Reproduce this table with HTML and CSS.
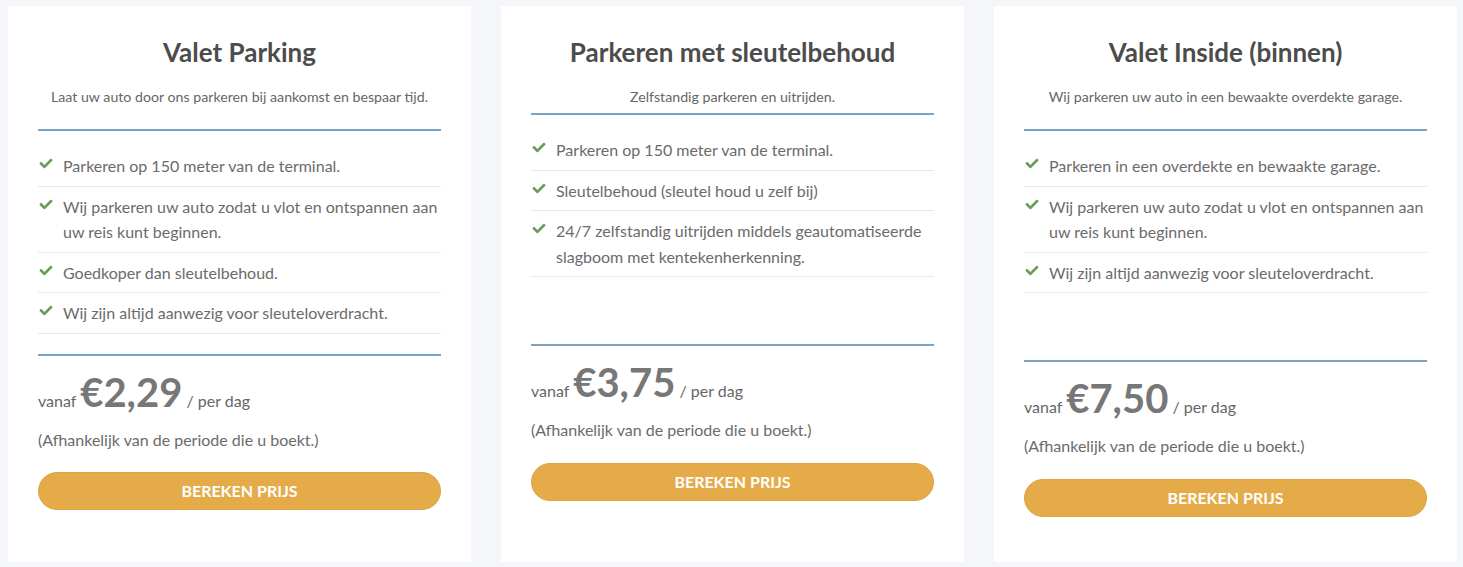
FILE: index.html
```html
<!DOCTYPE html>
<html lang="nl">
<head>
    <meta charset="UTF-8">
    <title>Parkeren - tarieven</title>
    <link rel="stylesheet" href="styles.css">
</head>
<body>

<div class="plans">

    <!-- Valet -->
    <div class="plan">
        <div class="plan-head">
            <h2 class="plan-title">Valet Parking</h2>
            <p class="plan-intro">Laat uw auto door ons parkeren bij aankomst en bespaar tijd.</p>
        </div>
        <ul class="features">
            <li><svg class="check" viewBox="0 0 512 512"><path d="M173.9 439.4l-166.4-166.4c-10-10-10-26.2 0-36.2l36.2-36.2c10-10 26.2-10 36.2 0L192 312.7 432.1 72.6c10-10 26.2-10 36.2 0l36.2 36.2c10 10 10 26.2 0 36.2l-294.4 294.4c-10 10-26.2 10-36.2 0z"/></svg><span>Parkeren op 150 meter van de terminal.</span></li>
            <li><svg class="check" viewBox="0 0 512 512"><path d="M173.9 439.4l-166.4-166.4c-10-10-10-26.2 0-36.2l36.2-36.2c10-10 26.2-10 36.2 0L192 312.7 432.1 72.6c10-10 26.2-10 36.2 0l36.2 36.2c10 10 10 26.2 0 36.2l-294.4 294.4c-10 10-26.2 10-36.2 0z"/></svg><span>Wij parkeren uw auto zodat u vlot en ontspannen aan uw reis kunt beginnen.</span></li>
            <li><svg class="check" viewBox="0 0 512 512"><path d="M173.9 439.4l-166.4-166.4c-10-10-10-26.2 0-36.2l36.2-36.2c10-10 26.2-10 36.2 0L192 312.7 432.1 72.6c10-10 26.2-10 36.2 0l36.2 36.2c10 10 10 26.2 0 36.2l-294.4 294.4c-10 10-26.2 10-36.2 0z"/></svg><span>Goedkoper dan sleutelbehoud.</span></li>
            <li><svg class="check" viewBox="0 0 512 512"><path d="M173.9 439.4l-166.4-166.4c-10-10-10-26.2 0-36.2l36.2-36.2c10-10 26.2-10 36.2 0L192 312.7 432.1 72.6c10-10 26.2-10 36.2 0l36.2 36.2c10 10 10 26.2 0 36.2l-294.4 294.4c-10 10-26.2 10-36.2 0z"/></svg><span>Wij zijn altijd aanwezig voor sleuteloverdracht.</span></li>
        </ul>
        <div class="plan-price">
            <div class="price"><span>vanaf</span> <strong>€2,29</strong> <span>/ per dag</span></div>
            <p class="price-note">(Afhankelijk van de periode die u boekt.)</p>
            <a class="btn-calc" href="#">Bereken prijs</a>
        </div>
    </div>

    <!-- Sleutelbehoud -->
    <div class="plan">
        <div class="plan-head tight">
            <h2 class="plan-title">Parkeren met sleutelbehoud</h2>
            <p class="plan-intro">Zelfstandig parkeren en uitrijden.</p>
        </div>
        <ul class="features short">
            <li><svg class="check" viewBox="0 0 512 512"><path d="M173.9 439.4l-166.4-166.4c-10-10-10-26.2 0-36.2l36.2-36.2c10-10 26.2-10 36.2 0L192 312.7 432.1 72.6c10-10 26.2-10 36.2 0l36.2 36.2c10 10 10 26.2 0 36.2l-294.4 294.4c-10 10-26.2 10-36.2 0z"/></svg><span>Parkeren op 150 meter van de terminal.</span></li>
            <li><svg class="check" viewBox="0 0 512 512"><path d="M173.9 439.4l-166.4-166.4c-10-10-10-26.2 0-36.2l36.2-36.2c10-10 26.2-10 36.2 0L192 312.7 432.1 72.6c10-10 26.2-10 36.2 0l36.2 36.2c10 10 10 26.2 0 36.2l-294.4 294.4c-10 10-26.2 10-36.2 0z"/></svg><span>Sleutelbehoud (sleutel houd u zelf bij)</span></li>
            <li><svg class="check" viewBox="0 0 512 512"><path d="M173.9 439.4l-166.4-166.4c-10-10-10-26.2 0-36.2l36.2-36.2c10-10 26.2-10 36.2 0L192 312.7 432.1 72.6c10-10 26.2-10 36.2 0l36.2 36.2c10 10 10 26.2 0 36.2l-294.4 294.4c-10 10-26.2 10-36.2 0z"/></svg><span>24/7 zelfstandig uitrijden middels geautomatiseerde slagboom met kentekenherkenning.</span></li>
        </ul>
        <div class="plan-price">
            <div class="price"><span>vanaf</span> <strong>€3,75</strong> <span>/ per dag</span></div>
            <p class="price-note">(Afhankelijk van de periode die u boekt.)</p>
            <a class="btn-calc" href="#">Bereken prijs</a>
        </div>
    </div>

    <!-- Valet inside -->
    <div class="plan">
        <div class="plan-head">
            <h2 class="plan-title">Valet Inside (binnen)</h2>
            <p class="plan-intro">Wij parkeren uw auto in een bewaakte overdekte garage.</p>
        </div>
        <ul class="features short">
            <li><svg class="check" viewBox="0 0 512 512"><path d="M173.9 439.4l-166.4-166.4c-10-10-10-26.2 0-36.2l36.2-36.2c10-10 26.2-10 36.2 0L192 312.7 432.1 72.6c10-10 26.2-10 36.2 0l36.2 36.2c10 10 10 26.2 0 36.2l-294.4 294.4c-10 10-26.2 10-36.2 0z"/></svg><span>Parkeren in een overdekte en bewaakte garage.</span></li>
            <li><svg class="check" viewBox="0 0 512 512"><path d="M173.9 439.4l-166.4-166.4c-10-10-10-26.2 0-36.2l36.2-36.2c10-10 26.2-10 36.2 0L192 312.7 432.1 72.6c10-10 26.2-10 36.2 0l36.2 36.2c10 10 10 26.2 0 36.2l-294.4 294.4c-10 10-26.2 10-36.2 0z"/></svg><span>Wij parkeren uw auto zodat u vlot en ontspannen aan uw reis kunt beginnen.</span></li>
            <li><svg class="check" viewBox="0 0 512 512"><path d="M173.9 439.4l-166.4-166.4c-10-10-10-26.2 0-36.2l36.2-36.2c10-10 26.2-10 36.2 0L192 312.7 432.1 72.6c10-10 26.2-10 36.2 0l36.2 36.2c10 10 10 26.2 0 36.2l-294.4 294.4c-10 10-26.2 10-36.2 0z"/></svg><span>Wij zijn altijd aanwezig voor sleuteloverdracht.</span></li>
        </ul>
        <div class="plan-price">
            <div class="price"><span>vanaf</span> <strong>€7,50</strong> <span>/ per dag</span></div>
            <p class="price-note">(Afhankelijk van de periode die u boekt.)</p>
            <a class="btn-calc" href="#">Bereken prijs</a>
        </div>
    </div>

</div>

</body>
</html>
```

FILE: styles.css
```css
html {
    background: #f4f6fa;
}

body {
    margin: 6px 6px 0 8px;
    font-family: Lato, "Open Sans", Arial, sans-serif;
    color: #6b6b6b;
}

.plans {
    display: grid;
    grid-template-columns: 1fr 1fr 1fr;
    gap: 30px;
}

.plan {
    background: #fff;
    padding: 30px 30px 45px 30px;
}

.plan-head {
    text-align: center;
    padding-bottom: 22px;
    border-bottom: 2px solid #7aa3c5;
}

.plan-head.tight {
    padding-bottom: 6px;
}

.plan-title {
    margin: 0 0 19px 0;
    font-size: 26px;
    line-height: 32px;
    font-weight: 700;
    color: #4c4c4c;
}

.plan-intro {
    margin: 0;
    font-size: 14.2px;
    line-height: 20px;
    color: #666;
}

.features {
    list-style: none;
    margin: 15px 0 20px 0;
    padding: 0;
    font-size: 16px;
    line-height: 25.5px;
}

.features.short {
    margin-bottom: 67px;
}

.features li {
    display: flex;
    align-items: flex-start;
    gap: 9px;
    padding: 7px 0;
    border-bottom: 1px solid #e9e9e9;
}

.check {
    flex: 0 0 16px;
    width: 16px;
    height: 13px;
    margin-top: 4px;
    fill: #6b9b5b;
}

.plan-price {
    border-top: 2px solid #7aa3c5;
    padding-top: 12px;
}

.price {
    font-size: 16px;
    line-height: 1.2;
    color: #666;
}

.price strong {
    font-size: 40px;
    font-weight: 700;
    color: #777;
}

.price-note {
    margin: 11px 0 20px 0;
    font-size: 16px;
    line-height: 25.5px;
}

.btn-calc {
    display: block;
    height: 36px;
    line-height: 36px;
    border: 1px solid #dca445;
    border-radius: 19px;
    background: #e4ab48;
    color: #fff;
    text-align: center;
    text-decoration: none;
    text-transform: uppercase;
    font-size: 16px;
    font-weight: 700;
}
```
